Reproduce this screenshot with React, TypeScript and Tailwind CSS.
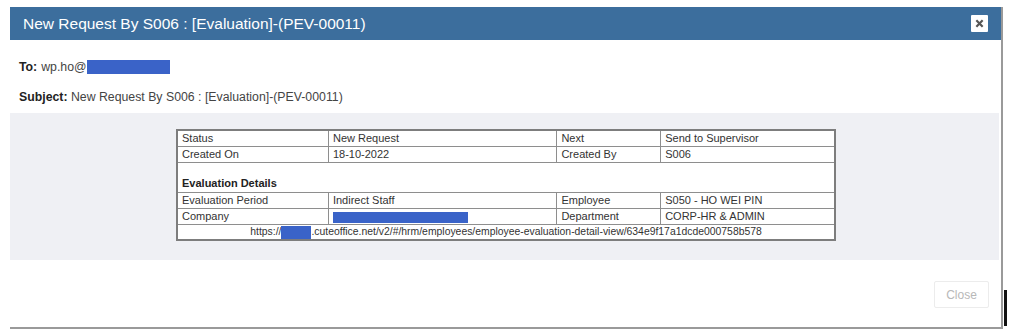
import React from "react";

const Redact = ({ w, h }: { w: number; h: number }) => (
  <span className="inline-block bg-[#3a63c8] align-middle" style={{ width: w, height: h }} />
);

export default function App() {
  const cell = "border border-[#8e8e8e] px-[4px] h-[16px] leading-[14px] align-middle";
  return (
    <div className="w-[1012px] h-[336px] bg-white font-['Liberation_Sans',Arial,sans-serif] pt-[7px] pl-[10px] relative">
      <div className="w-[993px] border-r-2 border-b-[2px] border-[#9a9a9a] bg-white">
        <div className="h-[33px] bg-[#3c6e9d] flex items-center justify-between pl-[13px] pr-[13px]">
          <span className="text-white text-[15.5px]">New Request By S006 : [Evaluation]-(PEV-00011)</span>
          <span className="w-[17px] h-[17px] bg-white flex items-center justify-center rounded-[1px]">
            <svg width="9" height="9" viewBox="0 0 10 10">
              <path d="M1.5 1.5 L8.5 8.5 M8.5 1.5 L1.5 8.5" stroke="#555" strokeWidth="2.4" />
            </svg>
          </span>
        </div>
        <div className="h-[73px] pl-[9px] pt-[20px] text-[12.3px] text-[#444]">
          <div className="h-[14px] flex items-center">
            <b className="text-[#222]">To:</b>
            <span className="ml-[4px]">wp.ho@</span>
            <Redact w={83} h={14} />
          </div>
          <div className="mt-[14px]">
            <b className="text-[#222]">Subject:</b> New Request By S006 : [Evaluation]-(PEV-00011)
          </div>
        </div>
        <div className="h-[147px] bg-[#eff0f4] pt-[16px] mr-[2px]">
          <table className="ml-[166px] w-[660px] border-collapse border-2 border-[#7d7d7d] bg-white text-[11px] text-[#333]">
            <colgroup>
              <col style={{ width: 152 }} />
              <col style={{ width: 229 }} />
              <col style={{ width: 104 }} />
              <col style={{ width: 175 }} />
            </colgroup>
            <tbody>
              <tr>
                <td className={cell}>Status</td>
                <td className={cell}>New Request</td>
                <td className={cell}>Next</td>
                <td className={cell}>Send to Supervisor</td>
              </tr>
              <tr>
                <td className={cell}>Created On</td>
                <td className={cell}>18-10-2022</td>
                <td className={cell}>Created By</td>
                <td className={cell}>S006</td>
              </tr>
              <tr>
                <td colSpan={4} className="border border-[#8e8e8e] px-[4px] h-[30px] align-bottom pb-[2px] font-bold text-[#222] leading-[14px]">
                  Evaluation Details
                </td>
              </tr>
              <tr>
                <td className={cell}>Evaluation Period</td>
                <td className={cell}>Indirect Staff</td>
                <td className={cell}>Employee</td>
                <td className={cell}>S050 - HO WEI PIN</td>
              </tr>
              <tr>
                <td className={cell}>Company</td>
                <td className={cell}>
                  <Redact w={135} h={11} />
                </td>
                <td className={cell}>Department</td>
                <td className={cell}>CORP-HR &amp; ADMIN</td>
              </tr>
              <tr>
                <td colSpan={4} className="border border-[#8e8e8e] h-[16px] text-center leading-[14px] text-[10.4px]">
                  https://<Redact w={30} h={13} />.cuteoffice.net/v2/#/hrm/employees/employee-evaluation-detail-view/634e9f17a1dcde000758b578
                </td>
              </tr>
            </tbody>
          </table>
        </div>
        <div className="h-[67px] flex justify-end items-start pt-[21px] pr-[12px]">
          <button className="w-[55px] h-[27px] border border-[#ececec] rounded-[2px] text-[12px] text-[#b8b8b8] bg-white">
            Close
          </button>
        </div>
      </div>
      <div className="absolute left-[1004px] top-[290px] w-[3px] h-[36px] bg-[#111]" />
    </div>
  );
}
